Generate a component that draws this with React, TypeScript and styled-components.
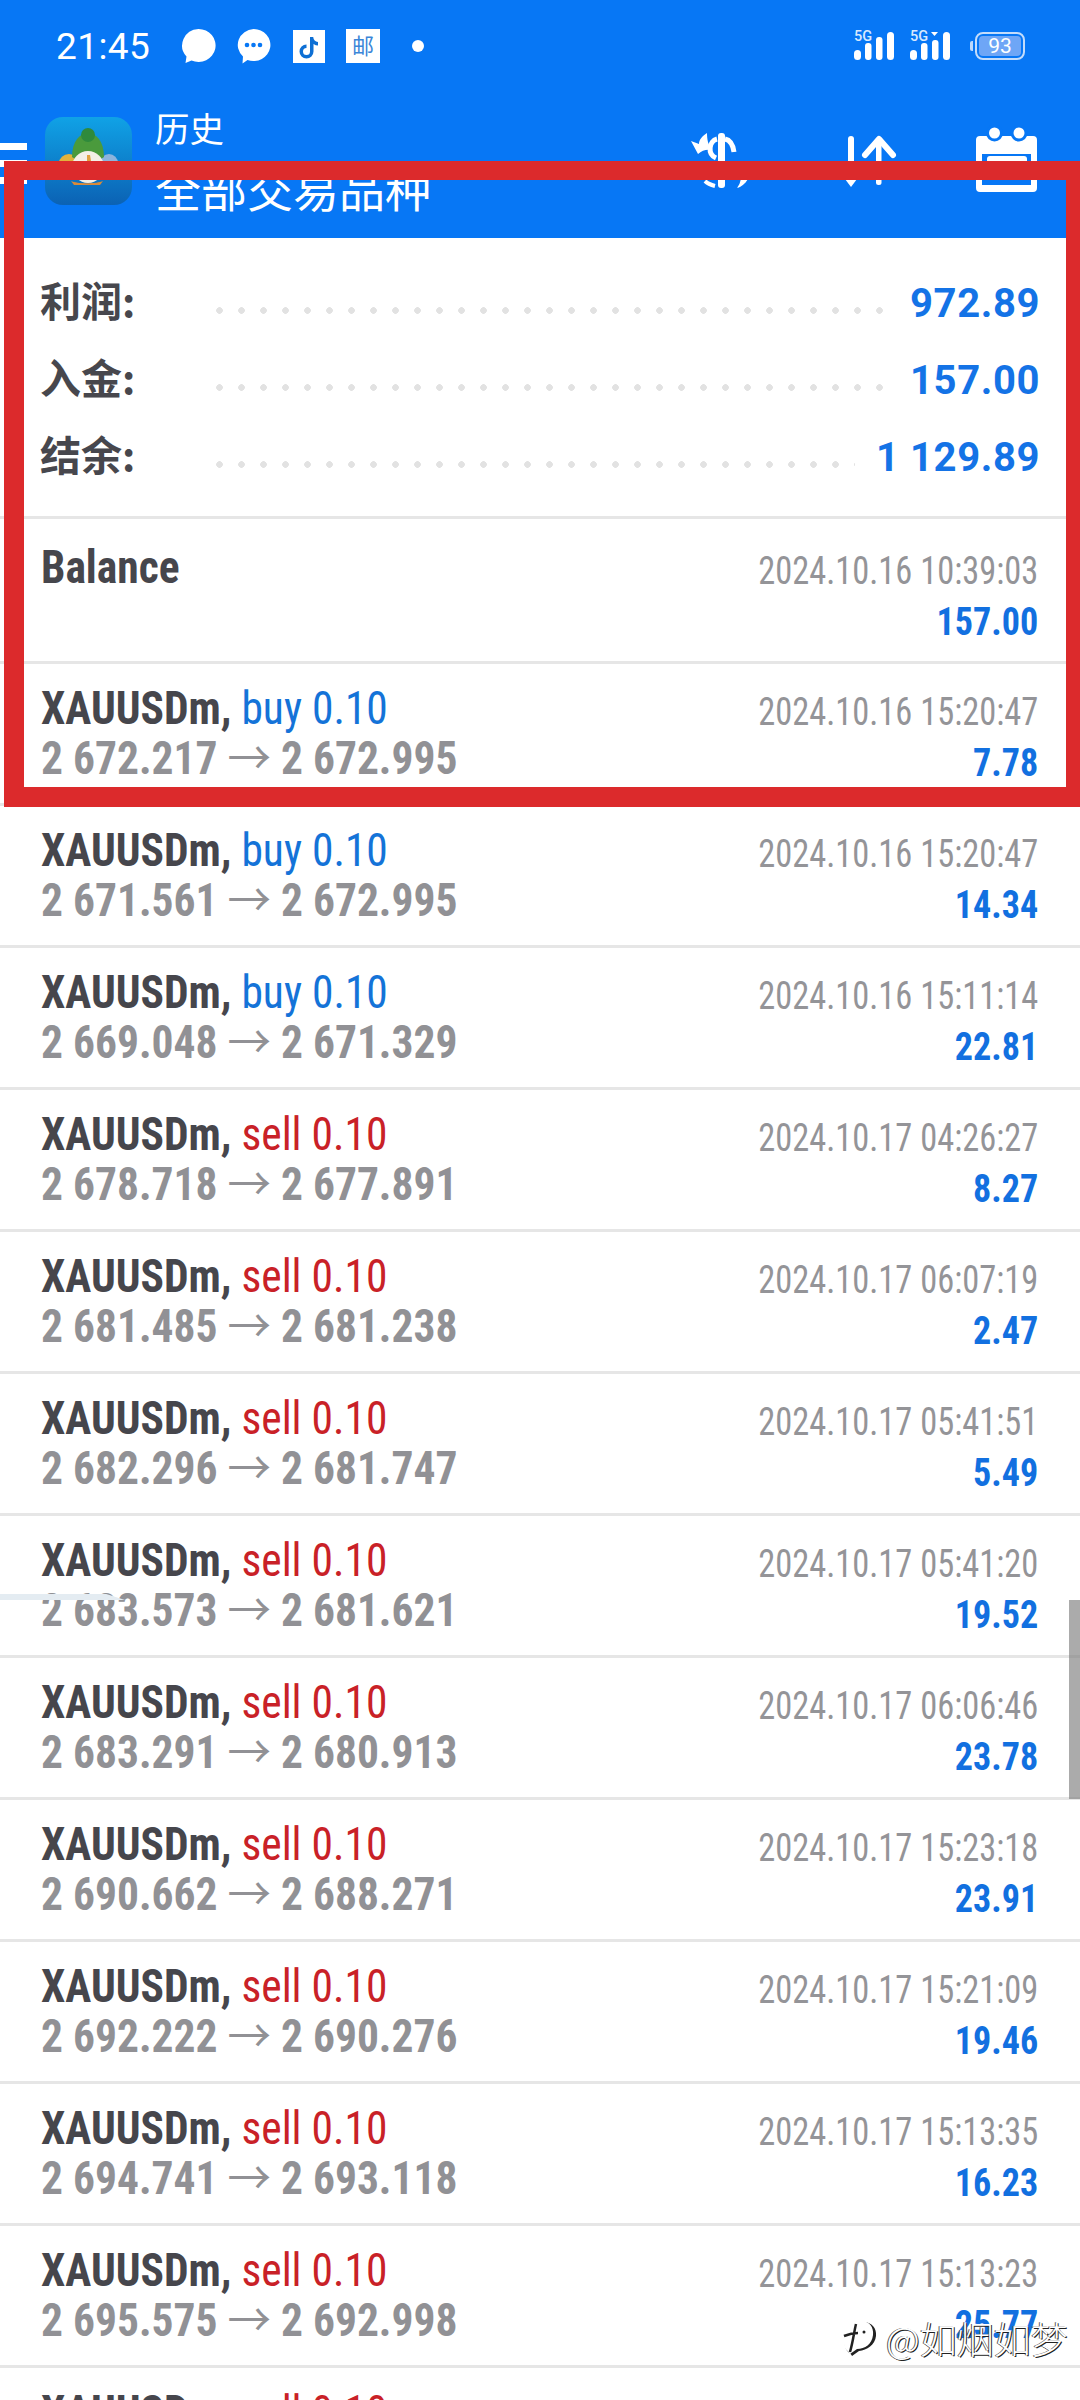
import React from "react";
import styled, { createGlobalStyle } from "styled-components";

const GlobalStyle = createGlobalStyle`
  html, body {
    margin: 0;
    padding: 0;
    background: #fff;
  }
`;

const Phone = styled.div`
  position: relative;
  width: 1080px;
  height: 2400px;
  overflow: hidden;
  background: #fff;
  font-family: Roboto, "Noto Sans CJK SC", sans-serif;
`;

const TopArea = styled.header`
  background: #0777f5;
  height: 238px;
  color: #fff;
`;

const StatusBar = styled.div`
  display: flex;
  align-items: center;
  height: 92px;
  padding: 0 55px 0 56px;
`;

const Clock = styled.span`
  font-size: 37px;
  width: 125px;
  letter-spacing: 0.4px;
`;

const StatusIcon = styled.svg<{ $ml?: number }>`
  display: block;
  flex: none;
  margin-left: ${(p) => p.$ml ?? 0}px;
`;

const StatusRight = styled.div`
  display: flex;
  align-items: center;
  margin-left: auto;
`;

const BatteryNub = styled.div`
  width: 3px;
  height: 10px;
  margin: 0 2px 0 20px;
  border-radius: 2px 0 0 2px;
  background: #bcd8fb;
`;

const Battery = styled.div`
  box-sizing: border-box;
  width: 50px;
  height: 28px;
  padding: 2px;
  border: 2px solid #c3dcfb;
  border-radius: 8px;
`;

const BatteryFill = styled.div`
  height: 100%;
  border-radius: 4px;
  background: #6ea6f6;
  font-size: 21px;
  line-height: 20px;
  text-align: center;
`;

const Toolbar = styled.div`
  display: flex;
  height: 146px;
`;

const Hamburger = styled.div`
  display: flex;
  flex-direction: column;
  gap: 10px;
  width: 27px;
  padding-top: 51px;
`;

const HamburgerLine = styled.div`
  height: 7px;
  background: #fff;
`;

const AppLogo = styled.svg`
  display: block;
  flex: none;
  margin: 25px 0 0 18px;
`;

const Titles = styled.div`
  display: flex;
  flex-direction: column;
  margin-left: 23px;
  padding-top: 8px;
`;

const PageTitle = styled.div`
  font-family: "Noto Sans CJK SC", sans-serif;
  font-size: 34.5px;
  line-height: 55px;
`;

const SymbolFilter = styled.div`
  font-family: "Noto Sans CJK SC", sans-serif;
  font-size: 46px;
  line-height: 64px;
`;

const ToolIcons = styled.div`
  display: flex;
  margin-left: auto;
  padding: 33px 41px 0 0;
`;

const ToolIcon = styled.svg<{ $ml?: number }>`
  display: block;
  flex: none;
  margin-left: ${(p) => p.$ml ?? 0}px;
`;

const Summary = styled.section`
  box-sizing: border-box;
  height: 281px;
  padding-top: 25px;
  border-bottom: 3px solid #e6e6e6;
`;

const SummaryRow = styled.div`
  display: flex;
  align-items: center;
  height: 77px;
  padding: 0 40px;
`;

const SummaryLabel = styled.span`
  flex: none;
  width: 175.5px;
  padding-bottom: 6px;
  font-family: "Noto Sans CJK SC", sans-serif;
  font-size: 41px;
  font-weight: 700;
  color: #47474d;
`;

const Dots = styled.span`
  flex: 1;
  height: 7px;
  margin: 18px 21px 0 0;
  background-image: radial-gradient(circle at 3.5px 3.5px, #e2e2e2 3px, transparent 3.6px);
  background-size: 22px 7px;
  background-repeat: repeat-x;
`;

const SummaryValue = styled.span`
  padding-top: 4px;
  font-size: 40px;
  font-weight: 700;
  letter-spacing: 0.6px;
  color: #1473e6;
`;

const Row = styled.div<{ $height: number; $top: number }>`
  box-sizing: border-box;
  display: flex;
  justify-content: space-between;
  height: ${(p) => p.$height}px;
  padding: ${(p) => p.$top}px 42px 0 41px;
  border-bottom: 3px solid #e6e6e6;
  font-stretch: 75%;
`;

/* no Roboto Condensed on the box, so the text is narrowed a little further */
const RowLeft = styled.div`
  font-size: 46px;
  line-height: 50px;
  white-space: nowrap;
  transform: scaleX(0.945);
  transform-origin: left top;
`;

const Symbol = styled.span`
  font-weight: 700;
  color: #46464c;
`;

const Side = styled.span<{ $side: "buy" | "sell" }>`
  color: ${(p) => (p.$side === "buy" ? "#1473d8" : "#c92127")};
`;

const Prices = styled.div`
  font-weight: 700;
  color: #919195;
`;

const Arrow = styled.span`
  font-weight: 400;
`;

const RowRight = styled.div`
  text-align: right;
  padding-top: 4px;
`;

const TimeText = styled.div`
  font-size: 38px;
  line-height: 50px;
  color: #949498;
  white-space: nowrap;
  transform: scaleX(0.905);
  transform-origin: right top;
`;

const Profit = styled.div`
  font-size: 38px;
  line-height: 52px;
  font-weight: 700;
  color: #1270e0;
  transform: scaleX(0.95);
  transform-origin: right top;
`;

/* the red frame someone drew on top of the screenshot */
const RedFrame = styled.div`
  position: absolute;
  left: 4px;
  top: 161px;
  right: 0;
  height: 646px;
  box-sizing: border-box;
  border: solid #dc2a2c;
  border-width: 19px 14px 20px 20px;
  pointer-events: none;
`;

const ScrollThumb = styled.div`
  position: absolute;
  right: 0;
  top: 1600px;
  width: 11px;
  height: 199px;
  background: rgba(120, 120, 120, 0.62);
`;

const SelectionStreak = styled.div`
  position: absolute;
  left: 0;
  top: 1594px;
  width: 125px;
  height: 6px;
  background: #e4ecf2;
  clip-path: polygon(0 0, 85% 0, 100% 100%, 0 100%);
`;

const Watermark = styled.div`
  position: absolute;
  left: 842px;
  top: 2316px;
  display: flex;
  align-items: center;
  gap: 8px;
  font-family: "Noto Sans CJK SC", sans-serif;
  font-size: 37px;
  line-height: 44px;
  font-weight: 300;
  color: #fff;
  text-shadow: 1px 1px 0 #222, -1px 0 0 #555;
`;

type Trade = {
  side: "buy" | "sell";
  open: string;
  close: string;
  time: string;
  profit: string;
};

const trades: Trade[] = [
  { side: "buy", open: "2 672.217", close: "2 672.995", time: "2024.10.16 15:20:47", profit: "7.78" },
  { side: "buy", open: "2 671.561", close: "2 672.995", time: "2024.10.16 15:20:47", profit: "14.34" },
  { side: "buy", open: "2 669.048", close: "2 671.329", time: "2024.10.16 15:11:14", profit: "22.81" },
  { side: "sell", open: "2 678.718", close: "2 677.891", time: "2024.10.17 04:26:27", profit: "8.27" },
  { side: "sell", open: "2 681.485", close: "2 681.238", time: "2024.10.17 06:07:19", profit: "2.47" },
  { side: "sell", open: "2 682.296", close: "2 681.747", time: "2024.10.17 05:41:51", profit: "5.49" },
  { side: "sell", open: "2 683.573", close: "2 681.621", time: "2024.10.17 05:41:20", profit: "19.52" },
  { side: "sell", open: "2 683.291", close: "2 680.913", time: "2024.10.17 06:06:46", profit: "23.78" },
  { side: "sell", open: "2 690.662", close: "2 688.271", time: "2024.10.17 15:23:18", profit: "23.91" },
  { side: "sell", open: "2 692.222", close: "2 690.276", time: "2024.10.17 15:21:09", profit: "19.46" },
  { side: "sell", open: "2 694.741", close: "2 693.118", time: "2024.10.17 15:13:35", profit: "16.23" },
  { side: "sell", open: "2 695.575", close: "2 692.998", time: "2024.10.17 15:13:23", profit: "25.77" },
];

const summary = [
  { label: "利润:", value: "972.89" },
  { label: "入金:", value: "157.00" },
  { label: "结余:", value: "1 129.89" },
];

const Signal: React.FC<{ roaming?: boolean; ml?: number }> = ({ roaming, ml }) => (
  <StatusIcon $ml={ml} width="40" height="34" viewBox="0 -2 40 34">
    <text x="0" y="10" fontSize="14.500" fontWeight="500" fontFamily="Roboto" fill="#d8e9fe">
      5G
    </text>
    <rect x="0" y="19" width="7" height="10" rx="3.500" fill="#fff" />
    <rect x="11" y="12" width="6.500" height="17" rx="3" fill="#fff" />
    {roaming ? (
      <>
        <path d="M21 1h7l-3.500 4z" fill="#fff" />
        <rect x="22" y="9" width="6.500" height="20" rx="3" fill="#fff" />
      </>
    ) : (
      <rect x="22" y="6" width="6.500" height="23" rx="3" fill="#fff" />
    )}
    <rect x="33" y="1" width="7" height="28" rx="3.500" fill="#fff" />
  </StatusIcon>
);

const StatusIcons: React.FC = () => (
  <>
    <StatusIcon width="35" height="36" viewBox="0 0 35 36">
      <path d="M17.500 1a17 16.500 0 1 1-7 31.500l-6 2.500 1-6.500A17 16.500 0 0 1 17.500 1z" fill="#fff" />
    </StatusIcon>
    <StatusIcon $ml={20} width="35" height="36" viewBox="0 0 35 36">
      <path d="M17.500 1a17 16 0 1 1-6 31l-5 3.500.5-7A17 16 0 0 1 17.500 1z" fill="#fff" />
      <circle cx="11" cy="17" r="2.300" fill="#0777f5" />
      <circle cx="17.500" cy="17" r="2.300" fill="#0777f5" />
      <circle cx="24" cy="17" r="2.300" fill="#0777f5" />
    </StatusIcon>
    <StatusIcon $ml={22} width="32" height="33" viewBox="0 0 32 33">
      <rect width="32" height="33" fill="#fff" />
      <path
        d="M17 7v14.500a3.500 3.500 0 1 1-3.500-3.500v-3.500a7 7 0 1 0 7 7v-7.500c1.500 1 3 1.500 4.500 1.500v-3.500c-2.800-.3-4.500-2.300-4.800-5z"
        fill="#0d6fd4"
      />
    </StatusIcon>
    <StatusIcon $ml={21} width="34" height="34" viewBox="0 0 34 34">
      <rect width="34" height="34" fill="#fff" />
      <text x="17" y="25" textAnchor="middle" fontSize="22" fontFamily="Noto Sans CJK SC" fill="#3a86d8">
        邮
      </text>
    </StatusIcon>
    <StatusIcon $ml={32} width="12" height="12" viewBox="0 0 12 12">
      <circle cx="6" cy="6" r="6" fill="#fff" />
    </StatusIcon>
  </>
);

const MetaTraderLogo: React.FC = () => (
  <AppLogo width="87" height="88" viewBox="0 0 87 88">
    <defs>
      <linearGradient id="logoBg" x1="0" y1="0" x2="0" y2="1">
        <stop offset="0" stopColor="#10a2e6" />
        <stop offset="1" stopColor="#0b62b4" />
      </linearGradient>
    </defs>
    <rect width="87" height="88" rx="18" fill="url(#logoBg)" />
    <ellipse cx="64" cy="46" rx="9" ry="9" fill="#8db4dc" />
    <ellipse cx="24" cy="46" rx="10" ry="9" fill="#e2b23c" />
    <path d="M27 40c0-16 8-24 16-24s16 8 16 24l-6 4H33z" fill="#4a9a3c" />
    <circle cx="43" cy="18" r="7" fill="#2f8a3c" />
    <circle cx="43" cy="50" r="16" fill="#f3efe6" />
    <path d="M42 38l3 0 1 6h-4z" fill="#e0a040" />
    <path d="M26 64c6 3 26 3 32 0l-3 4H29z" fill="#d98a3a" />
  </AppLogo>
);

const MoneyIcon: React.FC = () => (
  <ToolIcon width="66" height="72" viewBox="0 0 66 72" fill="none">
    <path d="M24 8c-5 3-8 7-8 11l-8-3 7 13c4-4 9-5 14-4-4-5-5-11-5-17z" fill="#fff" />
    <rect x="35" y="8" width="7" height="55" rx="3" fill="#fff" />
    <path d="M34 14c-8 2-10 15-1 19" stroke="#fff" strokeWidth="5" />
    <path d="M42 14c5 1 8 6 9 13" stroke="#fff" strokeWidth="5" />
    <path d="M65 54c-3 5-7 8-11 9 3-4 3-6 4-9z" fill="#fff" />
    <path d="M22 56c2 2 6 4 10 5" stroke="#fff" strokeWidth="4" />
  </ToolIcon>
);

const SortIcon: React.FC = () => (
  <ToolIcon $ml={89} width="64" height="72" viewBox="0 0 64 72" fill="none">
    <rect x="10" y="11" width="6" height="48" rx="3" fill="#fff" />
    <path d="M7 54l6 8 6-8z" fill="#fff" />
    <rect x="38" y="13" width="5.500" height="47" rx="2.500" fill="#fff" />
    <path d="M27 30l14-16 14 16" stroke="#fff" strokeWidth="6" strokeLinecap="round" strokeLinejoin="round" />
  </ToolIcon>
);

const CalendarIcon: React.FC = () => (
  <ToolIcon $ml={73} width="64" height="72" viewBox="0 0 64 72">
    <path
      fillRule="evenodd"
      d="M5 11h53a4 4 0 0 1 4 4v48a4 4 0 0 1-4 4H5a4 4 0 0 1-4-4V15a4 4 0 0 1 4-4zM7 29v31h49V29z"
      fill="#fff"
    />
    <circle cx="19.500" cy="8" r="8.500" fill="#0777f5" />
    <circle cx="44" cy="8" r="8.500" fill="#0777f5" />
    <circle cx="19.500" cy="8" r="5.500" fill="#fff" />
    <circle cx="44" cy="8" r="5.500" fill="#fff" />
    <rect x="12" y="31" width="40" height="24" rx="3" fill="#fff" />
  </ToolIcon>
);

const WatermarkLogo: React.FC = () => (
  <svg width="36" height="40" viewBox="0 0 36 40" fill="none">
    <path d="M10 38c-1-3-6-4-7-10C1 16 8 5 20 4c9-1 15 6 14 14-1 9-9 14-17 15z" fill="#222" />
    <path d="M8 36c-1-3-6-4-6-10C0 15 7 4 18 3c9-1 14 6 13 14-1 9-8 14-16 14z" fill="#fff" />
    <path d="M2 18c5-2 9-3 14-3M14 6c-2 8-3 18-6 28" stroke="#222" strokeWidth="2.500" />
    <circle cx="22" cy="14" r="1.500" fill="#222" />
  </svg>
);

const App: React.FC = () => {
  return (
    <Phone>
      <GlobalStyle />
      <TopArea>
        <StatusBar>
          <Clock>21:45</Clock>
          <StatusIcons />
          <StatusRight>
            <Signal />
            <Signal roaming ml={16} />
            <BatteryNub />
            <Battery>
              <BatteryFill>93</BatteryFill>
            </Battery>
          </StatusRight>
        </StatusBar>
        <Toolbar>
          <Hamburger>
            <HamburgerLine />
            <HamburgerLine />
            <HamburgerLine />
          </Hamburger>
          <MetaTraderLogo />
          <Titles>
            <PageTitle>历史</PageTitle>
            <SymbolFilter>全部交易品种</SymbolFilter>
          </Titles>
          <ToolIcons>
            <MoneyIcon />
            <SortIcon />
            <CalendarIcon />
          </ToolIcons>
        </Toolbar>
      </TopArea>

      <Summary>
        {summary.map((item) => (
          <SummaryRow key={item.label}>
            <SummaryLabel>{item.label}</SummaryLabel>
            <Dots />
            <SummaryValue>{item.value}</SummaryValue>
          </SummaryRow>
        ))}
      </Summary>

      <Row $height={145} $top={23}>
        <RowLeft>
          <Symbol>Balance</Symbol>
        </RowLeft>
        <RowRight>
          <TimeText>2024.10.16 10:39:03</TimeText>
          <Profit>157.00</Profit>
        </RowRight>
      </Row>

      {trades.map((t, i) => (
        <Row key={i} $height={142} $top={19}>
          <RowLeft>
            <div>
              <Symbol>XAUUSDm,</Symbol> <Side $side={t.side}>{t.side} 0.10</Side>
            </div>
            <Prices>
              {t.open} <Arrow>→</Arrow> {t.close}
            </Prices>
          </RowLeft>
          <RowRight>
            <TimeText>{t.time}</TimeText>
            <Profit>{t.profit}</Profit>
          </RowRight>
        </Row>
      ))}

      <Row $height={142} $top={19}>
        <RowLeft>
          <Symbol>XAUUSDm,</Symbol> <Side $side="sell">sell 0.10</Side>
        </RowLeft>
      </Row>

      <RedFrame />
      <ScrollThumb />
      <SelectionStreak />
      <Watermark>
        <WatermarkLogo />
        <span>@如烟如梦</span>
      </Watermark>
    </Phone>
  );
};

export default App;
